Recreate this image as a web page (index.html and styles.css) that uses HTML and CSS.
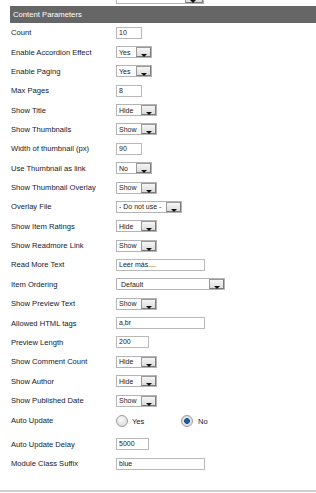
FILE: index.html
```html
<!DOCTYPE html>
<html lang="es">
<head>
    <meta charset="UTF-8">
    <title>Content Parameters</title>
    <link rel="stylesheet" href="styles.css">
</head>
<body>
    <div class="params">
        <div class="top-row">
            <span class="sel sel-top"><span class="sel-text"></span><span class="sel-btn"></span></span>
        </div>
        <div class="section-head">Content Parameters</div>

        <div class="rows">
            <div class="row"><label>Count</label><span class="inp inp-s">10</span></div>
            <div class="row"><label>Enable Accordion Effect</label><span class="sel sel-yn"><span class="sel-text">Yes</span><span class="sel-btn"></span></span></div>
            <div class="row"><label>Enable Paging</label><span class="sel sel-yn"><span class="sel-text">Yes</span><span class="sel-btn"></span></span></div>
            <div class="row"><label>Max Pages</label><span class="inp inp-s">8</span></div>
            <div class="row"><label>Show Title</label><span class="sel sel-hs"><span class="sel-text">Hide</span><span class="sel-btn"></span></span></div>
            <div class="row"><label>Show Thumbnails</label><span class="sel sel-hs"><span class="sel-text">Show</span><span class="sel-btn"></span></span></div>
            <div class="row"><label>Width of thumbnail (px)</label><span class="inp inp-s">90</span></div>
            <div class="row"><label>Use Thumbnail as link</label><span class="sel sel-yn"><span class="sel-text">No</span><span class="sel-btn"></span></span></div>
            <div class="row"><label>Show Thumbnail Overlay</label><span class="sel sel-hs"><span class="sel-text">Show</span><span class="sel-btn"></span></span></div>
            <div class="row"><label>Overlay File</label><span class="sel sel-file"><span class="sel-text">- Do not use -</span><span class="sel-btn"></span></span></div>
            <div class="row"><label>Show Item Ratings</label><span class="sel sel-hs"><span class="sel-text">Hide</span><span class="sel-btn"></span></span></div>
            <div class="row"><label>Show Readmore Link</label><span class="sel sel-hs"><span class="sel-text">Show</span><span class="sel-btn"></span></span></div>
            <div class="row"><label>Read More Text</label><span class="inp inp-l">Leer más....</span></div>
            <div class="row"><label>Item Ordering</label><span class="sel sel-wide"><span class="sel-text">Default</span><span class="sel-btn"></span></span></div>
            <div class="row"><label>Show Preview Text</label><span class="sel sel-hs"><span class="sel-text">Show</span><span class="sel-btn"></span></span></div>
            <div class="row"><label>Allowed HTML tags</label><span class="inp inp-l">a,br</span></div>
            <div class="row"><label>Preview Length</label><span class="inp inp-m">200</span></div>
            <div class="row"><label>Show Comment Count</label><span class="sel sel-hs"><span class="sel-text">Hide</span><span class="sel-btn"></span></span></div>
            <div class="row"><label>Show Author</label><span class="sel sel-hs"><span class="sel-text">Hide</span><span class="sel-btn"></span></span></div>
            <div class="row"><label>Show Published Date</label><span class="sel sel-hs"><span class="sel-text">Show</span><span class="sel-btn"></span></span></div>
            <div class="row row-tall">
                <label>Auto Update</label>
                <span class="radios">
                    <span class="radio-opt"><span class="radio"></span>Yes</span>
                    <span class="radio-opt"><span class="radio checked"></span>No</span>
                </span>
            </div>
            <div class="row"><label>Auto Update Delay</label><span class="inp inp-m">5000</span></div>
            <div class="row"><label>Module Class Suffix</label><span class="inp inp-l">blue</span></div>
        </div>
        <div class="bottom-line"></div>
    </div>
</body>
</html>
```
FILE: styles.css
```css
body, html {
    margin: 0;
    padding: 0;
    background-color: #fff;
    font-family: 'Liberation Sans', Arial, sans-serif;
    color: #121830;
}
.params {
    width: 316px;
    height: 492px;
    display: flex;
    flex-direction: column;
}
.top-row {
    height: 4px;
    overflow: hidden;
    padding-left: 116px;
    display: flex;
    align-items: flex-end;
}
.section-head {
    margin: 2px 0 0 10px;
    height: 17px;
    line-height: 17px;
    padding-left: 3px;
    background-color: #666;
    color: #fff;
    font-size: 7.7px;
}
.rows {
    padding-left: 11px;
}
.row {
    height: 19.37px;
    display: flex;
    align-items: center;
}
.row-tall {
    height: 24.5px;
    align-items: flex-start;
}
.row label {
    width: 105px;
    flex-shrink: 0;
    font-size: 7.6px;
}
.row-tall label {
    margin-top: 6px;
}
/* text inputs */
.inp {
    box-sizing: border-box;
    height: 12px;
    border: 1px solid #b9b9b9;
    background-color: #fff;
    padding-left: 2px;
    font-size: 7px;
    line-height: 10px;
    color: #222;
}
.inp-s { width: 26px; }
.inp-m { width: 33px; }
.inp-l { width: 89px; }
/* select boxes */
.sel {
    box-sizing: border-box;
    height: 12px;
    border: 1px solid #b4b4b4;
    background-color: #fff;
    display: flex;
    align-items: center;
    padding-left: 2px;
    font-size: 7px;
    color: #222;
}
.sel-text {
    flex: 1;
    white-space: nowrap;
}
.sel-btn {
    position: relative;
    box-sizing: border-box;
    width: 15px;
    height: 10px;
    border: 1px solid #7a7a7a;
    border-top-color: #9a9a9a;
    border-left-color: #9a9a9a;
    background: linear-gradient(#f6f6f6, #dcdcdc);
}
.sel-btn::after {
    content: "";
    position: absolute;
    left: 4px;
    bottom: -1px;
    border-left: 3px solid transparent;
    border-right: 3px solid transparent;
    border-top: 3px solid #111;
}
.sel-yn { width: 36px; }
.sel-hs { width: 41px; }
.sel-file { width: 66px; }
.sel-wide { width: 109px; padding-left: 4px; }
.sel-top { width: 88px; height: 12px; }
.sel-top .sel-btn { width: 18px; }
/* radio buttons */
.radios {
    display: flex;
    align-items: center;
    margin-top: 5px;
}
.radio-opt {
    display: flex;
    align-items: center;
    width: 65px;
    font-size: 7.6px;
}
.radio {
    box-sizing: border-box;
    width: 12px;
    height: 12px;
    margin-right: 4px;
    border: 1px solid #9c9c9c;
    border-radius: 50%;
    background: radial-gradient(circle at 40% 35%, #fafafa, #d4d4d4);
}
.radio.checked {
    margin-right: 5px;
    background: radial-gradient(circle, #1f6fc4 0, #0d4a8e 2.5px, #e8e8e8 3.2px, #cfcfcf 100%);
}
.bottom-line {
    margin-top: auto;
    height: 2px;
    background-color: #d0d0d0;
}
```
